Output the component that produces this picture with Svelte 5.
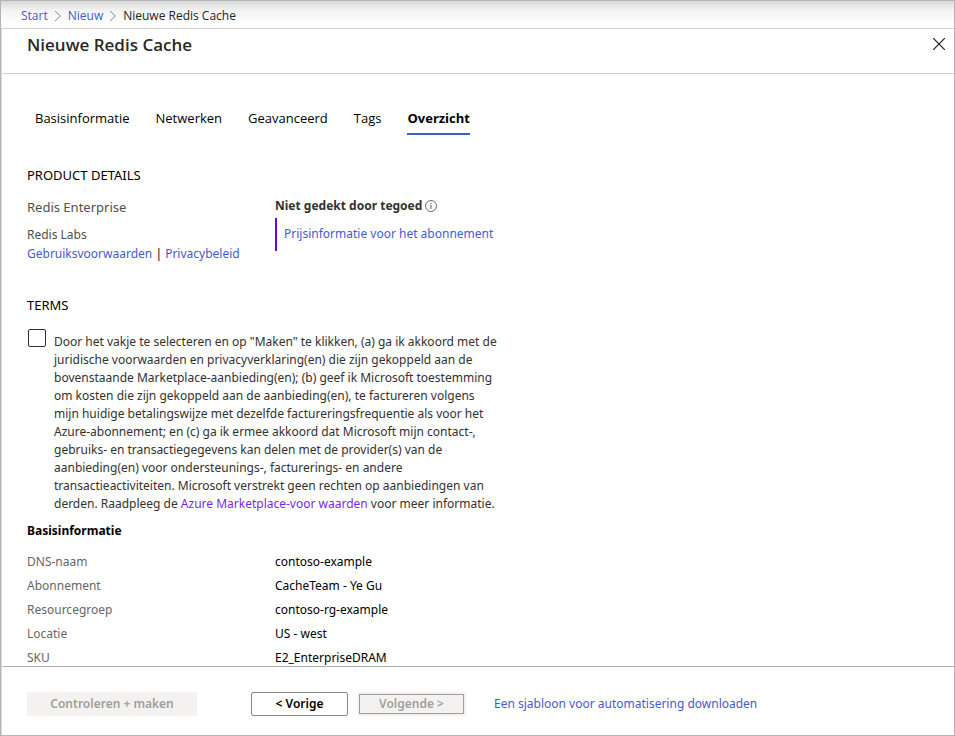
<script>
  const tabs = ['Basisinformatie', 'Netwerken', 'Geavanceerd', 'Tags', 'Overzicht'];
  const active = 'Overzicht';
  const summary = [
    ['DNS-naam', 'contoso-example'],
    ['Abonnement', 'CacheTeam - Ye Gu'],
    ['Resourcegroep', 'contoso-rg-example'],
    ['Locatie', 'US - west'],
    ['SKU', 'E2_EnterpriseDRAM'],
  ];
  let accepted = $state(false);
</script>

{#snippet chevron()}
  <svg viewBox="0 0 8 12" width="8" height="12" aria-hidden="true">
    <path d="M1 1 6.5 6 1 11" fill="none" stroke="#8a8a8a" />
  </svg>
{/snippet}

<div class="blade">
  <nav class="crumbs" aria-label="Breadcrumb">
    <a href="#start">Start</a>
    {@render chevron()}
    <a href="#nieuw">Nieuw</a>
    {@render chevron()}
    <span>Nieuwe Redis Cache</span>
  </nav>

  <header>
    <h1>Nieuwe Redis Cache</h1>
    <button class="close" type="button" aria-label="Sluiten">
      <svg viewBox="0 0 12 12" width="12" height="12" aria-hidden="true">
        <path d="M0 0 12 12M12 0 0 12" fill="none" stroke="#1b1a19" stroke-width="1.2" />
      </svg>
    </button>
  </header>

  <main>
    <nav class="tabs">
      {#each tabs as tab}
        <a href="#{tab.toLowerCase()}" class:active={tab === active}>{tab}</a>
      {/each}
    </nav>

    <section class="product">
      <h2>PRODUCT DETAILS</h2>
      <div class="columns">
        <div class="offer">
          <p class="name">Redis Enterprise</p>
          <p>Redis Labs</p>
          <p class="links">
            <a href="#voorwaarden">Gebruiksvoorwaarden</a> | <a href="#privacy">Privacybeleid</a>
          </p>
        </div>
        <div class="credit">
          <p class="notice">
            Niet gedekt door tegoed
            <svg viewBox="0 0 12 12" width="12" height="12" aria-hidden="true">
              <circle cx="6" cy="6" r="5.5" fill="none" stroke="#605e5c" stroke-width="0.9" />
              <path d="M6 5v4M6 3v1" stroke="#605e5c" />
            </svg>
          </p>
          <p class="pricing"><a href="#prijzen">Prijsinformatie voor het abonnement</a></p>
        </div>
      </div>
    </section>

    <section class="terms">
      <h2>TERMS</h2>
      <div class="agree">
        <input id="accept" type="checkbox" bind:checked={accepted} />
        <label for="accept">
          Door het vakje te selecteren en op "Maken" te klikken, (a) ga ik akkoord met de<br />
          juridische voorwaarden en privacyverklaring(en) die zijn gekoppeld aan de<br />
          bovenstaande Marketplace-aanbieding(en); (b) geef ik Microsoft toestemming<br />
          om kosten die zijn gekoppeld aan de aanbieding(en), te factureren volgens<br />
          mijn huidige betalingswijze met dezelfde factureringsfrequentie als voor het<br />
          Azure-abonnement; en (c) ga ik ermee akkoord dat Microsoft mijn contact-,<br />
          gebruiks- en transactiegegevens kan delen met de provider(s) van de<br />
          aanbieding(en) voor ondersteunings-, facturerings- en andere<br />
          transactieactiviteiten. Microsoft verstrekt geen rechten op aanbiedingen van<br />
          derden. Raadpleeg de <a class="visited" href="#marketplace">Azure Marketplace-voor waarden</a> voor meer informatie.
        </label>
      </div>
    </section>

    <section>
      <h3>Basisinformatie</h3>
      <dl>
        {#each summary as [key, value]}
          <dt>{key}</dt>
          <dd>{value}</dd>
        {/each}
      </dl>
    </section>
  </main>

  <footer>
    <button class="create" type="button" disabled>Controleren + maken</button>
    <button class="previous" type="button">&lt; Vorige</button>
    <button class="next" type="button" disabled><span>Volgende &gt;</span></button>
    <a href="#sjabloon">Een sjabloon voor automatisering downloaden</a>
  </footer>
</div>

<style>
  .blade {
    display: flex;
    flex-direction: column;
    box-sizing: border-box;
    height: 100vh;
    border: 1px solid #b3b3b3;
    box-shadow: inset 1px 0 #dcdcdc;
    background: #fff;
    color: #000;
    font: 12px/18px 'Noto Sans', sans-serif;
  }
  h1, h2, h3, p, dl, dd { margin: 0; }
  a { color: #4559d8; text-decoration: none; }
  button { font: inherit; cursor: pointer; }

  .crumbs, h1, .tabs { font-family: 'Open Sans', sans-serif; }

  .crumbs {
    display: flex;
    align-items: center;
    gap: 6px;
    box-sizing: border-box;
    height: 28px;
    padding: 2px 0 0 20px;
    border-bottom: 1px solid #d2d2d2;
    background: linear-gradient(#d9d9d9, #f3f3f3 35%, #fff 85%);
    color: #252423;
  }

  header {
    display: flex;
    justify-content: space-between;
    align-items: flex-start;
    box-sizing: border-box;
    height: 45px;
    padding: 4px 4px 0 26px;
    border-bottom: 1px solid #d2d2d2;
  }
  h1 { font-size: 17px; line-height: 24px; font-weight: 600; color: #292827; }
  .close {
    display: flex;
    align-items: center;
    justify-content: center;
    width: 22px;
    height: 22px;
    padding: 0;
    border: 0;
    background: none;
  }

  main {
    flex: 1;
    min-height: 0;
    overflow: hidden;
    padding: 32px 26px 0;
  }
  .tabs { display: flex; gap: 26px; padding-left: 8px; }
  .tabs a {
    padding: 3px 0 6px;
    border-bottom: 2px solid transparent;
    color: #000;
    font-size: 13px;
    line-height: 18px;
  }
  .tabs .active { border-color: #4559d8; font-weight: 700; }

  h2 { font-size: 13px; line-height: 18px; font-weight: 400; }
  .product { margin-top: 31px; }
  .columns { display: grid; grid-template-columns: 248px 1fr; margin-top: 12px; color: #505050; }
  .offer { padding-top: 2px; }
  .offer p { line-height: 19px; }
  .offer .name { margin-bottom: 8px; font-size: 13px; }
  .offer .links { color: #000; }
  .credit { padding-top: 1px; }
  .notice {
    display: flex;
    align-items: center;
    gap: 3px;
    color: #323130;
    font-weight: 700;
  }
  .pricing {
    box-sizing: border-box;
    height: 33px;
    margin-top: 3px;
    padding: 7px;
    border-left: 2px solid #6a00ff;
  }

  .terms { margin-top: 33px; }
  .agree { display: flex; gap: 8px; margin-top: 15px; color: #323130; }
  input {
    appearance: none;
    flex: none;
    box-sizing: border-box;
    width: 18px;
    height: 18px;
    margin: 0 0 0 1px;
    border: 1px solid #323130;
    border-radius: 2px;
    background: #fff;
  }
  input:checked { background: #4559d8; }
  label { padding-top: 4px; white-space: nowrap; }
  .visited { color: #7a1fff; }

  h3 { margin-top: 9px; font-size: 12px; line-height: 18px; font-weight: 700; }
  dl {
    display: grid;
    grid-template-columns: 248px 1fr;
    margin-top: 10px;
    line-height: 24px;
  }
  dt { color: #666; }

  footer {
    display: flex;
    align-items: center;
    box-sizing: border-box;
    height: 69px;
    margin-left: 1px;
    padding: 5px 25px 0;
    border-top: 1px solid #b3b3b3;
  }
  footer button {
    box-sizing: border-box;
    height: 24px;
    padding: 0;
    border: 0;
    border-radius: 2px;
    font-weight: 600;
    line-height: 16px;
  }
  footer button:disabled { background: #f3f2f1; color: #a19f9d; cursor: default; }
  .create { width: 170px; }
  footer .previous { width: 97px; margin: 0 9px 0 54px; border: 1px solid #8a8886; background: #fff; color: #000; }
  .next { width: 109px; margin-right: 28px; }
  footer .next { padding: 2px; }
  .next span { display: block; border: 1px solid #a19f9d; line-height: 18px; }
</style>
